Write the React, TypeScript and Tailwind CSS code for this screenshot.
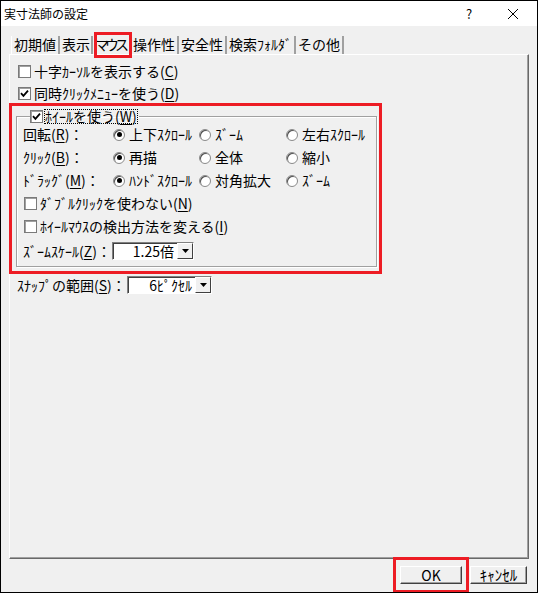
import { FC, ReactNode } from 'react'

const Check: FC<{ checked?: boolean }> = ({ checked }) => (
  <span className="w-[13px] h-[13px] shrink-0 border border-[#7a7a7a] bg-white flex items-center justify-center shadow-[inset_1px_1px_0_#a0a0a0]">
    {checked && (
      <svg width="9" height="9" viewBox="0 0 9 9">
        <path d="M1 4.2 L3.4 6.8 L8 1.6" stroke="black" strokeWidth="1.8" fill="none" />
      </svg>
    )}
  </span>
)

const Radio: FC<{ on?: boolean }> = ({ on }) => (
  <span className="w-[12px] h-[12px] shrink-0 rounded-full border border-[#8a8a8a] bg-white flex items-center justify-center shadow-[inset_1px_1px_0_#505050]">
    {on && <span className="w-[5px] h-[5px] rounded-full bg-black" />}
  </span>
)

const U: FC<{ children: ReactNode }> = ({ children }) => (
  <span className="underline underline-offset-2">{children}</span>
)

const Combo: FC<{ value: string; width: string }> = ({ value, width }) => (
  <div className={`${width} h-[18px] flex bg-white border border-t-[#808080] border-l-[#808080] border-r-white border-b-white shadow-[inset_1px_1px_0_#404040]`}>
    <span className="flex-1 text-right pr-[3px] leading-[16px]">{value}</span>
    <span className="w-[16px] h-[16px] bg-[#f0f0f0] border border-t-white border-l-white border-r-[#404040] border-b-[#404040] flex items-center justify-center">
      <svg width="7" height="4" viewBox="0 0 7 4">
        <path d="M0 0 H7 L3.5 4 Z" fill="black" />
      </svg>
    </span>
  </div>
)

const tabs = ['初期値', '表示', 'マウス', '操作性', '安全性', '検索ﾌｫﾙﾀﾞ', 'その他']

const radioRows = [
  { label: <>回転(<U>R</U>)：</>, opts: ['上下ｽｸﾛｰﾙ', 'ｽﾞｰﾑ', '左右ｽｸﾛｰﾙ'] },
  { label: <>ｸﾘｯｸ(<U>B</U>)：</>, opts: ['再描', '全体', '縮小'] },
  { label: <>ﾄﾞﾗｯｸﾞ(<U>M</U>)：</>, opts: ['ﾊﾝﾄﾞｽｸﾛｰﾙ', '対角拡大', 'ｽﾞｰﾑ'] },
]

const App: FC = () => {
  return (
    <div className="relative w-[538px] h-[593px] border border-black bg-[#f0f0f0] flex flex-col text-[14px] text-black font-['Noto_Sans_CJK_JP',sans-serif] overflow-hidden">
      {/* Title bar */}
      <div className="h-[25px] bg-white flex items-center pl-[3px] shrink-0">
        <span className="text-[12px] flex-1">実寸法師の設定</span>
        <span className="text-[13px] w-[20px] text-center mr-[28px]">?</span>
        <svg width="12" height="12" viewBox="0 0 12 12" className="mr-[18px]">
          <path d="M1 1 L11 11 M11 1 L1 11" stroke="black" strokeWidth="1" />
        </svg>
      </div>

      {/* Tabs */}
      <div className="flex pl-[10px] mt-[10px] h-[18px] items-end">
        {tabs.map((t, i) => (
          <div
            key={t}
            className={`h-[18px] leading-[17px] whitespace-nowrap ${i === 2 ? 'pl-[2px] pr-[4px] tracking-[-4px]' : 'px-[2px]'} ${i === 1 ? 'pr-[1px]' : ''} ${i === 0 ? 'border-l border-white' : ''} border-r-2 border-r-[#a0a0a0]`}
          >
            {t}
          </div>
        ))}
      </div>

      {/* Panel */}
      <div className="ml-[8px] w-[520px] h-[505px] border border-t-white border-l-white border-r-[#696969] border-b-[#696969] shadow-[inset_-1px_-1px_0_#a0a0a0] flex flex-col">
        <div className="flex items-center gap-[3px] h-[22px] mt-[5px] ml-[8px]">
          <Check />
          <span>十字ｶｰｿﾙを表示する(<U>C</U>)</span>
        </div>
        <div className="flex items-center gap-[3px] h-[22px] ml-[8px]">
          <Check checked />
          <span>同時ｸﾘｯｸﾒﾆｭｰを使う(<U>D</U>)</span>
        </div>

        {/* Wheel group */}
        <fieldset className="ml-[6px] w-[361px] mt-[4px] border border-[#a0a0a0] shadow-[inset_1px_1px_0_white,1px_1px_0_white] pl-[6px] pb-[2px]">
          <legend className="flex items-center gap-[1px] ml-[7px] pr-[1px] h-[16px]">
            <Check checked />
            <span className="outline outline-1 outline-dotted outline-black -outline-offset-1 px-[1px] leading-[15px]">
              ﾎｲｰﾙを使う(<U>W</U>)
            </span>
          </legend>
          <div className="flex flex-col -mt-[1px]">
            {radioRows.map((r, ri) => (
              <div key={ri} className="flex items-center h-[23px]">
                <span className="w-[90px] whitespace-nowrap">{r.label}</span>
                {r.opts.map((o, oi) => (
                  <span key={o + oi} className={`flex items-center gap-[4px] ${oi === 0 ? 'w-[86px]' : oi === 1 ? 'w-[87px]' : ''}`}>
                    <Radio on={oi === 0} />
                    <span className="whitespace-nowrap">{o}</span>
                  </span>
                ))}
              </div>
            ))}
            <div className="flex items-center gap-[3px] h-[23px] ml-[1px]">
              <Check />
              <span>ﾀﾞﾌﾞﾙｸﾘｯｸを使わない(<U>N</U>)</span>
            </div>
            <div className="flex items-center gap-[3px] h-[23px] ml-[1px]">
              <Check />
              <span>ﾎｲｰﾙﾏｳｽの検出方法を変える(<U>I</U>)</span>
            </div>
            <div className="flex items-center h-[26px]">
              <span className="w-[89px] whitespace-nowrap">ｽﾞｰﾑｽｹｰﾙ(<U>Z</U>)：</span>
              <Combo value="1.25倍" width="w-[82px]" />
            </div>
          </div>
        </fieldset>

        <div className="flex items-center h-[20px] mt-[8px] ml-[7px]">
          <span className="w-[110px] whitespace-nowrap">ｽﾅｯﾌﾟの範囲(<U>S</U>)：</span>
          <Combo value="6ﾋﾟｸｾﾙ" width="w-[85px]" />
        </div>
      </div>

      {/* Buttons */}
      <div className="flex justify-end gap-[8px] mt-[7px] mr-[10px]">
        <button className="w-[62px] h-[18px] border border-t-white border-l-white border-r-[#404040] border-b-[#404040] shadow-[inset_-1px_-1px_0_#a0a0a0] text-[14px] leading-[14px]">
          OK
        </button>
        <button className="w-[57px] h-[18px] border border-t-white border-l-white border-r-[#404040] border-b-[#404040] shadow-[inset_-1px_-1px_0_#a0a0a0] text-[15px] leading-[14px]">
          ｷｬﾝｾﾙ
        </button>
      </div>

      {/* Annotation highlights */}
      <div className="absolute left-[93px] top-[31px] w-[38px] h-[26px] border-[3px] border-[#ed1c24]" />
      <div className="absolute left-[8px] top-[102px] w-[373px] h-[171px] border-[3px] border-[#ed1c24]" />
      <div className="absolute left-[392px] top-[556px] w-[76px] h-[36px] border-[3px] border-[#ed1c24]" />
    </div>
  )
}

export default App
